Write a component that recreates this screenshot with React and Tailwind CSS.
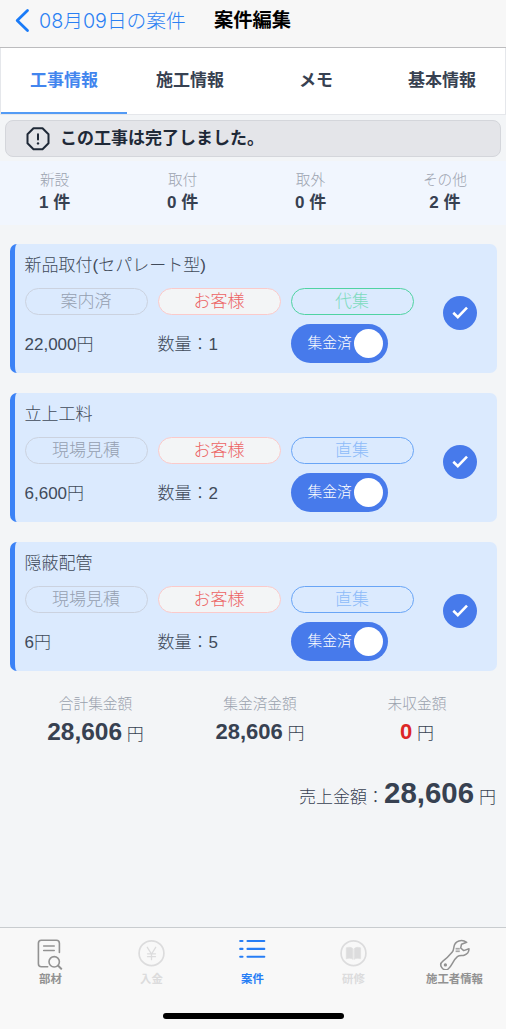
const FONT = "font-['Liberation_Sans','Noto_Sans_CJK_JP',sans-serif]";

const tabs = ['工事情報', '施工情報', 'メモ', '基本情報'];

const counts = [
  { label: '新設', value: 1 },
  { label: '取付', value: 0 },
  { label: '取外', value: 0 },
  { label: 'その他', value: 2 },
];

const items = [
  { title: '新品取付(セパレート型)', status: '案内済', collect: '代集', green: true, price: '22,000円', qty: 1 },
  { title: '立上工料', status: '現場見積', collect: '直集', price: '6,600円', qty: 2 },
  { title: '隠蔽配管', status: '現場見積', collect: '直集', price: '6円', qty: 5 },
];

function Header() {
  return (
    <header className="flex h-[48px] shrink-0 items-start border-b border-[#bcbcbe] bg-[#f7f7f7] pl-[15px] pt-[6px]">
      <svg className="mt-[2px] h-[25px] w-[16px] text-[#1a7bf8]" viewBox="0 0 16 25" fill="none" stroke="currentColor" strokeWidth="2.8" strokeLinecap="round" strokeLinejoin="round">
        <path d="M12.5 2.5 2.2 12.5l10.3 10" />
      </svg>
      <span className="ml-[8px] w-[175px] whitespace-nowrap font-['Inter','Noto_Sans_CJK_JP',sans-serif] text-[19.7px] font-light leading-[30px] text-[#2a80f3]">
        08月09日の案件
      </span>
      <h1 className="text-[19.3px] font-bold leading-[30px] text-black">案件編集</h1>
    </header>
  );
}

function Tabs() {
  return (
    <nav className="grid h-[67px] shrink-0 grid-cols-4 border-x border-b border-[#e5e7eb] bg-white">
      {tabs.map((tab, i) => (
        <div
          key={tab}
          className={
            i === 0
              ? 'flex items-center justify-center border-b-2 border-[#539bf5] pt-[1px] text-[17px] font-bold text-[#4285ee]'
              : 'flex items-center justify-center pb-[1px] text-[17px] font-bold text-[#374151]'
          }
        >
          {tab}
        </div>
      ))}
    </nav>
  );
}

function Notice() {
  return (
    <div className="mx-[5px] mt-[5px] flex h-[37px] shrink-0 items-center rounded-[8px] border border-[#d4d6db] bg-[#e4e5e9] pl-[20px] text-[#1f2937]">
      <svg className="h-[24px] w-[24px]" viewBox="0 0 24 24" fill="none" stroke="currentColor" strokeWidth="2" strokeLinejoin="round">
        <path d="M7.5 1.3h9l6 6v9l-6 6h-9l-6-6v-9z" />
        <path d="M12 7.2v5.2" strokeLinecap="round" />
        <circle cx="12" cy="16.4" r="1.2" fill="currentColor" stroke="none" />
      </svg>
      <span className="ml-[10px] text-[17px] font-bold leading-[24px]">この工事は完了しました。</span>
    </div>
  );
}

function Counts() {
  return (
    <div className="mt-[4px] flex h-[64px] shrink-0 justify-between bg-[#f1f6fe] px-[39px] pt-[9px]">
      {counts.map((c) => (
        <div key={c.label} className="flex flex-col items-center whitespace-nowrap">
          <span className="text-[14.7px] font-light leading-[20px] text-[#9ca3af]">{c.label}</span>
          <span className="text-[17px] font-bold leading-[26px] text-[#374151]">{c.value} 件</span>
        </div>
      ))}
    </div>
  );
}

const pill = 'flex h-[27px] items-center justify-center rounded-full border text-[17px] leading-[25px]';

function Card({ item }) {
  return (
    <article className="flex h-[129px] shrink-0 items-center rounded-[7px] border-l-[5px] border-[#3b82f6] bg-[#dbeafe] pl-[9.5px]">
      <div className="flex h-full w-[389px] flex-col pt-[9px] text-[#414b5a]">
        <h2 className="h-[34.5px] text-[17px] font-light leading-[26px]">{item.title}</h2>
        <div className="grid grid-cols-3 gap-x-[10px]">
          <span className={`${pill} border-[#cbd2df] font-light text-[#959fb0]`}>{item.status}</span>
          <span className={`${pill} border-[#fbcaca] bg-[#f3f5f6] font-light text-[#ec6363]`}>お客様</span>
          <span className={`${pill} font-light ${item.green ? 'border-[#50d3a2] text-[#7ddbbe]' : 'border-[#69a5f6] text-[#8dbbf9]'}`}>
            {item.collect}
          </span>
        </div>
        <div className="mt-[9.5px] grid grid-cols-3 items-center gap-x-[10px] text-[17px] font-light">
          <span className="pt-[2px]">{item.price}</span>
          <span className="pt-[2px]">数量：{item.qty}</span>
          <button className="flex h-[39px] w-[97.5px] items-center justify-between rounded-full bg-[#477aeb] pl-[17px] pr-[5px] text-[14.7px] font-light text-white">
            <span className="whitespace-nowrap">集金済</span>
            <span className="h-[29.5px] w-[29.5px] shrink-0 rounded-full bg-white" />
          </button>
        </div>
      </div>
      <div className="ml-[29px] mt-[9px] flex h-[34px] w-[34px] items-center justify-center rounded-full bg-[#477aeb]">
        <svg className="h-[34px] w-[34px]" viewBox="0 0 34 34" fill="none" stroke="white" strokeWidth="2.6">
          <path d="m10.3 16.8 4.5 4.4 9.2-9.6" />
        </svg>
      </div>
    </article>
  );
}

function Totals() {
  return (
    <>
      <div className="mt-[23px] flex shrink-0 whitespace-nowrap pl-[13px] text-center">
        <div className="w-[165px]">
          <div className="text-[14.7px] font-light leading-[20px] text-[#9aa1ad]">合計集金額</div>
          <div className="text-[17px] font-light leading-[35px] text-[#374151]">
            <b className="text-[24.5px] font-bold">28,606</b> 円
          </div>
        </div>
        <div className="w-[164px]">
          <div className="text-[14.7px] font-light leading-[20px] text-[#9aa1ad]">集金済金額</div>
          <div className="text-[17px] font-light leading-[36px] text-[#374151]">
            <b className="text-[22px] font-bold">28,606</b> 円
          </div>
        </div>
        <div className="w-[150px]">
          <div className="text-[14.7px] font-light leading-[20px] text-[#9aa1ad]">未収金額</div>
          <div className="text-[17px] font-light leading-[36px] text-[#374151]">
            <b className="text-[22px] font-bold text-[#dc2626]">0</b> 円
          </div>
        </div>
      </div>
      <div className="mt-[19px] flex shrink-0 items-baseline justify-end whitespace-nowrap pr-[10px] text-[17px] font-light leading-[44px] text-[#374151]">
        <span>売上金額：</span>
        <b className="mr-[5px] text-[29.4px] font-bold">28,606</b>
        <span>円</span>
      </div>
    </>
  );
}

const iconProps = {
  className: 'h-[34px] w-[34px]',
  viewBox: '0.8 0 34 34',
  fill: 'none',
  stroke: 'currentColor',
  strokeWidth: 1.6,
  strokeLinecap: 'round',
  strokeLinejoin: 'round',
};

function PartsIcon() {
  return (
    <svg {...iconProps}>
      <path d="M14.5 30.8H8.2a3 3 0 0 1-3-3V7.2a3 3 0 0 1 3-3h15a3 3 0 0 1 3 3v9.3" />
      <path d="M10.5 10h10.5M10.5 14.5h10.5" />
      <circle cx="21" cy="25.8" r="5.2" />
      <path d="m25 29.8 3 3" strokeWidth="2" />
    </svg>
  );
}

function YenIcon() {
  return (
    <svg {...iconProps}>
      <circle cx="17.3" cy="17.2" r="12.4" strokeWidth="1.7" />
      <path d="m13.1 11.3 4.2 6.7 4.2-6.7M17.3 18v5.7M13.3 17.8h8M13.3 20.7h8" strokeWidth="1.3" />
    </svg>
  );
}

function ListIcon() {
  return (
    <svg {...iconProps} strokeWidth="2.1">
      <path d="M5 5h2.3M12.3 5h16.8M5 12.9h2.3M12.3 12.9h16.8M5 20.7h2.3M12.3 20.7h16.8" />
    </svg>
  );
}

function BookIcon() {
  return (
    <svg {...iconProps}>
      <circle cx="17.3" cy="17.2" r="12.4" strokeWidth="1.7" />
      <path d="M16.6 12.5c-1.5-1.5-4.2-1.6-6.6-.7v11c2.4-.8 5.1-.7 6.6.5zM18.1 12.5c1.5-1.5 4-1.6 6.3-.7v11c-2.3-.8-4.8-.7-6.3.5z" fill="currentColor" strokeWidth=".5" />
    </svg>
  );
}

function WrenchIcon() {
  return (
    <svg {...iconProps} strokeWidth="1.5">
      <path d="M29.5 6.3C24.5 2.7 17.8 5 16.8 10.6c-.4 2.2-.3 3.7-1.7 5.4-3 3.6-6 6.6-9.4 9.1-5 3.8.3 11 5.5 7.7 3.7-3.1 4.8-8.9 9-12.2 2.2-1.6 4.7-.7 6.8-1.4 3.2-1 4.9-3.3 4.8-6.4l-5.3 1.8-3-2.6.8-3.8z" />
      <circle cx="8.2" cy="28.9" r=".9" fill="currentColor" />
      <path d="M18.8 12.4h3.4M18.8 14h3.4M18.8 15.6h3.4" strokeWidth=".9" />
    </svg>
  );
}

const nav = [
  { label: '部材', Icon: PartsIcon, tone: 'text-[#929292]' },
  { label: '入金', Icon: YenIcon, tone: 'text-[#dcdcdd]' },
  { label: '案件', Icon: ListIcon, tone: 'text-[#267df5]' },
  { label: '研修', Icon: BookIcon, tone: 'text-[#dcdcdd]' },
  { label: '施工者情報', Icon: WrenchIcon, tone: 'text-[#929292]' },
];

function BottomNav() {
  return (
    <footer className="mt-auto flex h-[102px] shrink-0 flex-col items-center border-t border-[#c8cccf] bg-[#f8f8f8]">
      <div className="grid w-[505px] grid-cols-5 self-start pt-[8px]">
        {nav.map(({ label, Icon, tone }) => (
          <div key={label} className={`flex flex-col items-center ${tone}`}>
            <Icon />
            <span className="whitespace-nowrap text-[11.4px] font-bold leading-[18px]">{label}</span>
          </div>
        ))}
      </div>
      <div className="mt-[25px] h-[6px] w-[181px] rounded-full bg-black" />
    </footer>
  );
}

export default function App() {
  return (
    <div className={`flex h-[1029px] w-[506px] flex-col overflow-hidden bg-[#f3f5f7] ${FONT}`}>
      <Header />
      <Tabs />
      <Notice />
      <Counts />
      <main className="ml-[10px] mr-[9px] mt-[19px] flex flex-col gap-[20px]">
        {items.map((item) => (
          <Card key={item.title} item={item} />
        ))}
      </main>
      <Totals />
      <BottomNav />
    </div>
  );
}
